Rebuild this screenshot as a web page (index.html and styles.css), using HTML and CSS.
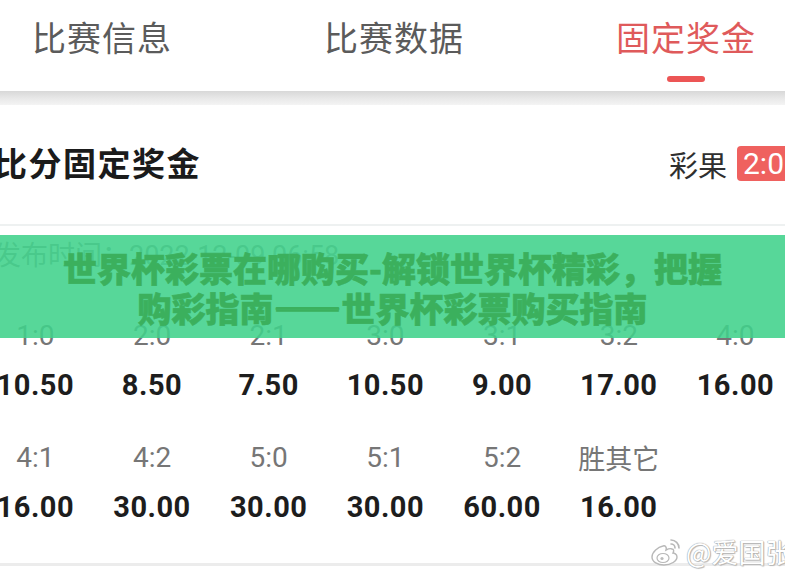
FILE: index.html
```html
<!DOCTYPE html>
<html lang="zh-CN">
<head>
<meta charset="utf-8">
<title>固定奖金</title>
<link rel="stylesheet" href="styles.css">
</head>
<body>
<div class="page">
  <nav class="tabs">
    <div class="tab"><span class="tab-label">比赛信息</span></div>
    <div class="tab"><span class="tab-label">比赛数据</span></div>
    <div class="tab tab-active"><span class="tab-label">固定奖金</span><i class="tab-bar"></i></div>
  </nav>
  <div class="band"></div>

  <section class="card">
    <div class="card-head">
      <h2 class="card-title">比分固定奖金</h2>
      <div class="result">
        <span class="result-label">彩果</span>
        <span class="result-badge">2:0</span>
      </div>
    </div>

    <div class="publish">发布时间：2022-12-09 06:58</div>

    <div class="odds">
      <div class="cell"><span class="score">1:0</span><b class="price">10.50</b></div>
      <div class="cell"><span class="score">2:0</span><b class="price">8.50</b></div>
      <div class="cell"><span class="score">2:1</span><b class="price">7.50</b></div>
      <div class="cell"><span class="score">3:0</span><b class="price">10.50</b></div>
      <div class="cell"><span class="score">3:1</span><b class="price">9.00</b></div>
      <div class="cell"><span class="score">3:2</span><b class="price">17.00</b></div>
      <div class="cell"><span class="score">4:0</span><b class="price">16.00</b></div>
      <div class="cell"><span class="score">4:1</span><b class="price">16.00</b></div>
      <div class="cell"><span class="score">4:2</span><b class="price">30.00</b></div>
      <div class="cell"><span class="score">5:0</span><b class="price">30.00</b></div>
      <div class="cell"><span class="score">5:1</span><b class="price">30.00</b></div>
      <div class="cell"><span class="score">5:2</span><b class="price">60.00</b></div>
      <div class="cell"><span class="score cjk">胜其它</span><b class="price">16.00</b></div>
    </div>
  </section>

  <div class="foot-line"></div>

  <h1 class="banner"><span>世界杯彩票在哪购买-解锁世界杯精彩，把握<br>购彩指南<em class="dash">——</em>世界杯彩票购买指南</span></h1>

  <div class="watermark">
    <svg class="wb-logo" width="32" height="30" viewBox="0 0 32 30">
      <path d="M13 9c-5 1-11 6-11 11 0 5 6 8 12 8 7 0 13-4 13-8 0-3-3-4-4-4 1-2 1-4-1-4-2-1-4 0-6 1 1-3-1-5-3-4z" fill="#fff" stroke="#b8b8b8" stroke-width="1.4"/>
      <ellipse cx="13" cy="21" rx="6" ry="4.5" fill="#fff" stroke="#b8b8b8" stroke-width="1.2"/>
      <circle cx="12" cy="21.5" r="1.6" fill="#bcbcbc"/>
      <path d="M21 3a8 8 0 0 1 8 8" fill="none" stroke="#b8b8b8" stroke-width="1.6" stroke-linecap="round"/>
      <path d="M21 7a4 4 0 0 1 4 4" fill="none" stroke="#b8b8b8" stroke-width="1.6" stroke-linecap="round"/>
    </svg>
    <span class="wb-name">@爱国张業</span>
  </div>
</div>
</body>
</html>
```

FILE: styles.css
```css
html, body {
  margin: 0;
  padding: 0;
  background: #fff;
}

.page {
  position: relative;
  width: 785px;
  height: 574px;
  overflow: hidden;
  font-family: "Noto Sans CJK SC", "Noto Sans", sans-serif;
}

/* top tab strip */
.tabs {
  display: grid;
  grid-template-columns: repeat(3, 292px);
  margin-left: -44px;
  height: 91px;
  background: #fff;
}

.tab {
  display: flex;
  flex-direction: column;
  align-items: center;
  padding-top: 16px;
}

.tab-label {
  font-size: 34px;
  line-height: 42px;
  color: #5b5b5b;
  letter-spacing: 1px;
}

.tab-active .tab-label {
  color: #df5a5b;
}

.tab-bar {
  display: block;
  width: 38px;
  height: 6px;
  margin-top: 18px;
  border-radius: 3px;
  background: #ec5555;
}

.band {
  height: 14px;
  background: linear-gradient(#d8d8d8, #e9e9e9 55%, #f4f4f4);
}

/* card */
.card {
  background: #fff;
}

.card-head {
  display: flex;
  align-items: center;
  justify-content: space-between;
  height: 119px;
  margin-left: -6px;
  margin-right: -5px;
  border-bottom: 2px solid #eef1f1;
}

.card-title {
  margin: 0 0 6px;
  font-size: 33px;
  font-weight: 700;
  color: #1b1b1b;
  letter-spacing: 1.5px;
}

.result {
  display: flex;
  align-items: center;
  gap: 10px;
  margin-bottom: 2px;
}

.result-label {
  font-size: 29px;
  color: #2f2f2f;
}

.result-badge {
  height: 35px;
  padding: 0 6px;
  border-radius: 4px;
  background: #ef615f;
  color: #fff;
  font-family: Roboto, "Noto Sans", sans-serif;
  font-size: 30px;
  line-height: 35px;
}

.publish {
  height: 80px;
  padding-top: 13px;
  margin-left: -6px;
  font-size: 27px;
  line-height: 34px;
  color: #8a8a8a;
  font-family: Roboto, "Noto Sans CJK SC", sans-serif;
}

/* score odds grid */
.odds {
  display: grid;
  grid-template-columns: repeat(7, 116.7px);
  row-gap: 39px;
  margin-left: -23px;
}

.cell {
  display: flex;
  flex-direction: column;
  align-items: center;
  gap: 15px;
}

.score {
  font-family: Roboto, "Noto Sans CJK SC", sans-serif;
  font-size: 28px;
  line-height: 34px;
  color: #767676;
}

.score.cjk {
  font-family: "Noto Sans CJK SC", sans-serif;
  font-size: 27px;
}

.price {
  font-family: Roboto, "Noto Sans", sans-serif;
  font-size: 29px;
  font-weight: 700;
  line-height: 34px;
  color: #1d1d1d;
  letter-spacing: 0.5px;
}

.foot-line {
  height: 3px;
  margin-top: 39px;
  background: #ececec;
}

/* green headline banner laid over the card */
.banner {
  position: absolute;
  left: 0;
  right: 0;
  top: 235px;
  height: 103px;
  margin: 0;
  display: flex;
  align-items: center;
  justify-content: center;
  background: rgba(64, 209, 139, 0.88);
  text-align: center;
  font-size: 34px;
  font-weight: 900;
  line-height: 40px;
  color: #3bb05d;
  -webkit-text-stroke: 0.6px #3bb05d;
}

.banner span {
  padding-top: 3px;
}

.banner .dash {
  font-style: normal;
  text-shadow: 0 1.5px currentColor, 0 -1.5px currentColor;
}

/* weibo watermark */
.watermark {
  position: absolute;
  left: 650px;
  top: 535px;
  display: flex;
  align-items: center;
  gap: 4px;
  white-space: nowrap;
}

.wb-name {
  font-size: 27px;
  line-height: 34px;
  color: #fff;
  text-shadow: 0 0 1px #9a9a9a, 0 0 1px #9a9a9a, 1px 1px 1px #bdbdbd;
}
```
